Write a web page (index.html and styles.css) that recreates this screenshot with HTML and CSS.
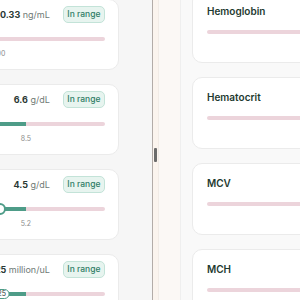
FILE: index.html
```html
<!DOCTYPE html>
<html lang="en">
<head>
    <meta charset="UTF-8">
    <meta name="viewport" content="width=device-width, initial-scale=1.0">
    <title>Lab Results</title>
    <link rel="stylesheet" href="styles.css">
</head>
<body>

    <div class="layout">
        <div class="pane left">
            <div class="list">
                <div class="card">
                    <div class="value-row">
                        <span class="value"><b>0.33</b> ng/mL</span>
                        <span class="badge">In range</span>
                    </div>
                    <div class="track">
                        <div class="fill" style="left: 0%; width: 20%;"></div>
                        <span class="mark" style="left: 30%;">1.00</span>
                    </div>
                </div>
                <div class="card">
                    <div class="value-row">
                        <span class="value"><b>6.6</b> g/dL</span>
                        <span class="badge">In range</span>
                    </div>
                    <div class="track">
                        <div class="fill" style="left: 0%; width: 48%;"></div>
                        <span class="mark" style="left: 48%;">8.5</span>
                    </div>
                </div>
                <div class="card">
                    <div class="value-row">
                        <span class="value"><b>4.5</b> g/dL</span>
                        <span class="badge">In range</span>
                    </div>
                    <div class="track">
                        <div class="fill" style="left: 0%; width: 48%;"></div>
                        <span class="knob" style="left: 31%;"></span>
                        <span class="mark" style="left: 48%;">5.2</span>
                    </div>
                </div>
                <div class="card">
                    <div class="value-row">
                        <span class="value"><b>4.25</b> million/uL</span>
                        <span class="badge">In range</span>
                    </div>
                    <div class="track">
                        <div class="fill" style="left: 0%; width: 48%;"></div>
                        <span class="pin" style="left: 30%;">4.25</span>
                    </div>
                </div>
            </div>
        </div>

        <div class="divider"><span class="handle"></span></div>

        <div class="gutter"></div>

        <div class="pane right">
            <div class="list">
                <div class="card wide">
                    <h3>Hemoglobin</h3>
                    <div class="track"></div>
                </div>
                <div class="card wide">
                    <h3>Hematocrit</h3>
                    <div class="track"></div>
                </div>
                <div class="card wide">
                    <h3>MCV</h3>
                    <div class="track"></div>
                </div>
                <div class="card wide">
                    <h3>MCH</h3>
                    <div class="track"></div>
                </div>
            </div>
        </div>
    </div>

</body>
</html>
```

FILE: styles.css
```css
body {
    margin: 0;
    font-family: 'Inter', 'Liberation Sans', sans-serif;
    background: #f6f6f6;
    color: #1e3a30;
}
.layout {
    display: flex;
    height: 300px;
    overflow: hidden;
}
.pane {
    overflow: hidden;
    flex-shrink: 0;
}
.left {
    width: 152px;
    background: #f6f6f6;
}
.left .list {
    display: flex;
    flex-direction: column;
    gap: 14px;
    width: 180px;
    margin: -1px 0 0 -61px;
}
.card {
    background: white;
    border: 1px solid #ebebeb;
    border-radius: 10px;
    padding: 6px 13px 0;
    height: 71px;
    box-sizing: border-box;
    flex-shrink: 0;
}
.value-row {
    display: flex;
    justify-content: flex-end;
    align-items: center;
    gap: 13px;
    height: 17px;
}
.value {
    font-size: 9px;
    color: #6f7a76;
}
.value b {
    color: #2b3935;
    font-weight: 700;
}
.badge {
    font-size: 8.5px;
    font-weight: 500;
    color: #2f7d66;
    background: #e7f4ef;
    border: 1px solid #c3e3d8;
    border-radius: 5px;
    padding: 2px 3.5px;
    line-height: 11px;
}
.track {
    position: relative;
    height: 4px;
    border-radius: 2px;
    background: #ecd4db;
    margin-top: 14px;
}
.fill {
    position: absolute;
    top: 0;
    bottom: 0;
    background: #4e9c88;
    border-radius: 2px 0 0 2px;
}
.mark {
    position: absolute;
    top: 12px;
    transform: translateX(-50%);
    font-size: 7px;
    color: #8c8c8c;
}
.knob {
    position: absolute;
    top: -4px;
    width: 8px;
    height: 8px;
    border: 2px solid #4e9c88;
    border-radius: 50%;
    background: white;
    transform: translateX(-50%);
}
.pin {
    position: absolute;
    top: -3px;
    transform: translateX(-50%);
    font-size: 7px;
    line-height: 8px;
    color: #2b3935;
    background: white;
    border: 1.5px solid #4e9c88;
    border-radius: 5px;
    padding: 0 3px;
}
.divider {
    position: relative;
    width: 6px;
    flex-shrink: 0;
    border-left: 1px solid #b3aca8;
    background: #fbf4ee;
    box-sizing: border-box;
}
.handle {
    position: absolute;
    left: 1px;
    top: 148px;
    width: 3px;
    height: 14px;
    background: #6b6b6b;
    border-radius: 1px;
}
.gutter {
    width: 22px;
    flex-shrink: 0;
    background: #fbf8f5;
    border-left: 1px solid #f1ebe6;
    box-sizing: border-box;
}
.right {
    flex: 1;
    background: #f9f9f9;
    border-left: 1px solid #efefef;
}
.right .list {
    display: flex;
    flex-direction: column;
    gap: 14px;
    width: 140px;
    margin: -9px 0 0 11px;
}
.card.wide {
    height: 72px;
    padding: 12px 14px 0;
}
h3 {
    margin: 0;
    font-size: 10px;
    font-weight: 600;
    line-height: 14px;
    color: #1e3a30;
}
.wide .track {
    margin-top: 12px;
}
```
